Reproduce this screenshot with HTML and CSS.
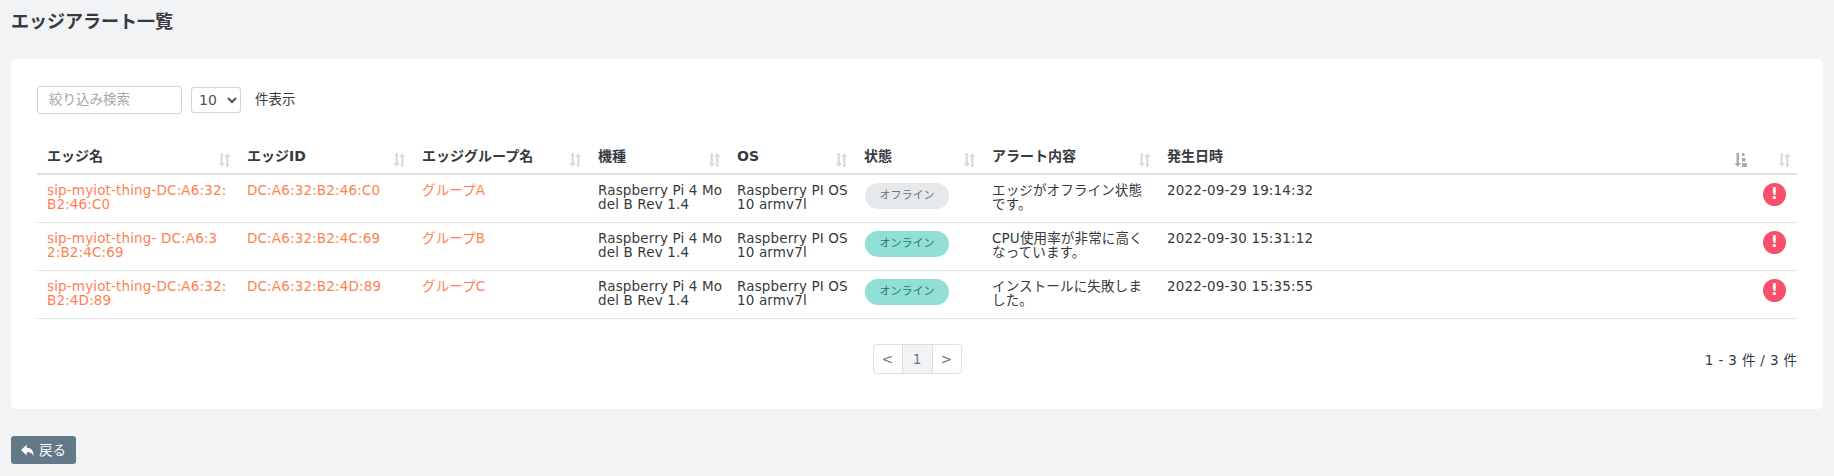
FILE: index.html
```html
<!DOCTYPE html>
<html lang="ja">
<head>
    <meta charset="UTF-8">
    <title>エッジアラート一覧</title>
    <link rel="stylesheet" href="styles.css">
</head>
<body>
    <svg class="defs" width="0" height="0">
        <defs>
            <g id="sort">
                <path d="M2.500 0h2.500v10h2L3.750 14 0.500 10h2z"/>
                <path d="M8 14h2.500V4h2L9.250 0 6 4h2z"/>
            </g>
        </defs>
    </svg>
    <h1>エッジアラート一覧</h1>
    <div class="card">
        <div class="toolbar">
            <input class="search" type="text" placeholder="絞り込み検索">
            <select class="per-page">
                <option>10</option>
            </select>
            <span class="per-label">件表示</span>
        </div>
        <table>
            <thead>
                <tr>
                    <th class="c-name"><div class="th-in">エッジ名<svg class="sort" viewBox="0 0 13 14"><use href="#sort"/></svg></div></th>
                    <th class="c-id"><div class="th-in">エッジID<svg class="sort" viewBox="0 0 13 14"><use href="#sort"/></svg></div></th>
                    <th class="c-group"><div class="th-in">エッジグループ名<svg class="sort" viewBox="0 0 13 14"><use href="#sort"/></svg></div></th>
                    <th class="c-model"><div class="th-in">機種<svg class="sort" viewBox="0 0 13 14"><use href="#sort"/></svg></div></th>
                    <th class="c-os"><div class="th-in">OS<svg class="sort" viewBox="0 0 13 14"><use href="#sort"/></svg></div></th>
                    <th class="c-state"><div class="th-in">状態<svg class="sort" viewBox="0 0 13 14"><use href="#sort"/></svg></div></th>
                    <th class="c-alert"><div class="th-in">アラート内容<svg class="sort" viewBox="0 0 13 14"><use href="#sort"/></svg></div></th>
                    <th class="c-date"><div class="th-in">発生日時
                        <svg class="sort active" viewBox="0 0 13 14">
                            <path d="M2.500 0h2.500v10h2L3.750 14 0.500 10h2z"/>
                            <path d="M8 0h2.500v3H8zM8 5h3.500v3.500H8zM8 10h5v4H8z"/>
                        </svg></div></th>
                    <th class="c-icon"><div class="th-in"><span></span><svg class="sort" viewBox="0 0 13 14"><use href="#sort"/></svg></div></th>
                </tr>
            </thead>
            <tbody>
                <tr>
                    <td><a href="#">sip-myiot-thing-DC:A6:32:B2:46:C0</a></td>
                    <td><a href="#">DC:A6:32:B2:46:C0</a></td>
                    <td><a href="#">グループA</a></td>
                    <td class="tight">Raspberry Pi 4 Model B Rev 1.4</td>
                    <td class="tight">Raspberry PI OS 10 armv7l</td>
                    <td><span class="badge off">オフライン</span></td>
                    <td>エッジがオフライン状態です。</td>
                    <td>2022-09-29 19:14:32</td>
                    <td class="icon-cell"><span class="alert-icon">!</span></td>
                </tr>
                <tr>
                    <td><a href="#">sip-myiot-thing- DC:A6:3<br>2:B2:4C:69</a></td>
                    <td><a href="#">DC:A6:32:B2:4C:69</a></td>
                    <td><a href="#">グループB</a></td>
                    <td class="tight">Raspberry Pi 4 Model B Rev 1.4</td>
                    <td class="tight">Raspberry PI OS 10 armv7l</td>
                    <td><span class="badge on">オンライン</span></td>
                    <td>CPU使用率が非常に高くなっています。</td>
                    <td>2022-09-30 15:31:12</td>
                    <td class="icon-cell"><span class="alert-icon">!</span></td>
                </tr>
                <tr>
                    <td><a href="#">sip-myiot-thing-DC:A6:32:B2:4D:89</a></td>
                    <td><a href="#">DC:A6:32:B2:4D:89</a></td>
                    <td><a href="#">グループC</a></td>
                    <td class="tight">Raspberry Pi 4 Model B Rev 1.4</td>
                    <td class="tight">Raspberry PI OS 10 armv7l</td>
                    <td><span class="badge on">オンライン</span></td>
                    <td>インストールに失敗しました。</td>
                    <td>2022-09-30 15:35:55</td>
                    <td class="icon-cell"><span class="alert-icon">!</span></td>
                </tr>
            </tbody>
        </table>
        <div class="table-foot">
            <span></span>
            <div class="pager">
                <a href="#">&lt;</a>
                <a href="#" class="current">1</a>
                <a href="#">&gt;</a>
            </div>
            <span class="count">1 - 3 件 / 3 件</span>
        </div>
    </div>
    <button class="back">
        <svg viewBox="0 0 16 14"><path d="M7 0v3.500c4.800 0.200 8.500 2.500 8.500 10.500-1.300-3.500-4-5-8.500-5.100V13L0 6.500z"/></svg>
        戻る
    </button>
</body>
</html>
```

FILE: styles.css
```css
body {
    margin: 0;
    padding: 0 11px;
    background-color: #f1f3f5;
    font-family: "DejaVu Sans", "Noto Sans CJK JP", sans-serif;
    font-size: 13.5px;
    color: #343a40;
}
.defs {
    display: block;
    height: 0;
}
h1 {
    margin: 0;
    padding-top: 10px;
    font-size: 18px;
    line-height: 24px;
    font-weight: 700;
    color: #343a40;
}
.card {
    margin-top: 25px;
    padding: 27px 26px 0;
    height: 350px;
    box-sizing: border-box;
    background-color: #fff;
    border-radius: 5px;
}
.toolbar {
    display: flex;
    align-items: center;
    height: 28px;
}
.search {
    box-sizing: border-box;
    width: 145px;
    height: 28px;
    padding: 0 9px 2px 11px;
    border: 1px solid #ced4da;
    border-radius: 3px;
    font-family: inherit;
    font-size: 13.5px;
}
.search::placeholder {
    color: #a3a9ae;
}
.per-page {
    box-sizing: border-box;
    width: 50px;
    height: 26px;
    margin-left: 9px;
    padding-left: 3px;
    border: 1px solid #ced4da;
    border-radius: 3px;
    background-color: #fff;
    font-family: inherit;
    font-size: 14px;
    color: #495057;
}
.per-label {
    margin-left: 14px;
    margin-top: -4px;
}
table {
    width: 1760px;
    margin-top: 32px;
    table-layout: fixed;
    border-collapse: collapse;
    line-height: 14px;
}
th {
    box-sizing: border-box;
    height: 27px;
    padding: 0 10px;
    text-align: left;
    font-size: 14px;
    font-weight: 700;
    border-bottom: 2px solid #dee2e6;
}
.th-in {
    display: flex;
    justify-content: space-between;
    align-items: flex-start;
    white-space: nowrap;
    height: 27px;
    line-height: 20px;
}
.sort {
    width: 13px;
    height: 14px;
    margin-top: 7px;
    margin-right: -4px;
    fill: #dadcde;
    flex: none;
}
.sort.active {
    fill: #a9acae;
}
.c-name { width: 200px; }
.c-id { width: 175px; }
.c-group { width: 176px; }
.c-model { width: 139px; }
.c-os { width: 127px; }
.c-state { width: 128px; }
.c-alert { width: 175px; }
.c-icon { width: 44px; }
td {
    height: 48px;
    padding: 8px 10px 0;
    box-sizing: border-box;
    vertical-align: top;
    word-break: break-all;
    letter-spacing: 0.15px;
    border-bottom: 1px solid #dee2e6;
}
td.tight {
    padding-right: 4px;
}
td a {
    color: #ff7f50;
    text-decoration: none;
}
.badge {
    display: block;
    width: 84px;
    height: 26px;
    margin-left: 1px;
    line-height: 26px;
    border-radius: 13px;
    text-align: center;
    font-size: 11px;
    letter-spacing: 0;
}
.badge.off {
    background-color: #e6e9ec;
    color: #6c757d;
}
.badge.on {
    background-color: #92e0d5;
    color: #1b7c70;
}
.icon-cell {
    padding: 8px 0 0;
}
.alert-icon {
    display: block;
    width: 23px;
    height: 23px;
    margin-left: 10px;
    line-height: 23px;
    border-radius: 50%;
    background-color: #f8506a;
    color: #fff;
    font-weight: 700;
    font-size: 15px;
    text-align: center;
}
.table-foot {
    display: grid;
    grid-template-columns: 1fr auto 1fr;
    align-items: center;
    width: 1760px;
    margin-top: 25px;
}
.pager {
    display: flex;
    border: 1px solid #dcdfe2;
    border-radius: 4px;
}
.pager a {
    width: 28px;
    height: 28px;
    line-height: 28px;
    text-align: center;
    color: #6c757d;
    text-decoration: none;
}
.pager .current {
    width: 29px;
    background-color: #f1f3f5;
    border-left: 1px solid #dcdfe2;
    border-right: 1px solid #dcdfe2;
}
.count {
    text-align: right;
    word-spacing: 0.7px;
}
.back {
    display: flex;
    align-items: center;
    gap: 5px;
    box-sizing: border-box;
    width: 65px;
    height: 28px;
    margin-top: 27px;
    padding: 0 0 2px 10px;
    border: none;
    border-radius: 3px;
    background-color: #647987;
    color: #fff;
    font-family: inherit;
    font-size: 13.5px;
}
.back svg {
    width: 13px;
    height: 13px;
    margin-top: 2px;
    fill: #fff;
}
```
